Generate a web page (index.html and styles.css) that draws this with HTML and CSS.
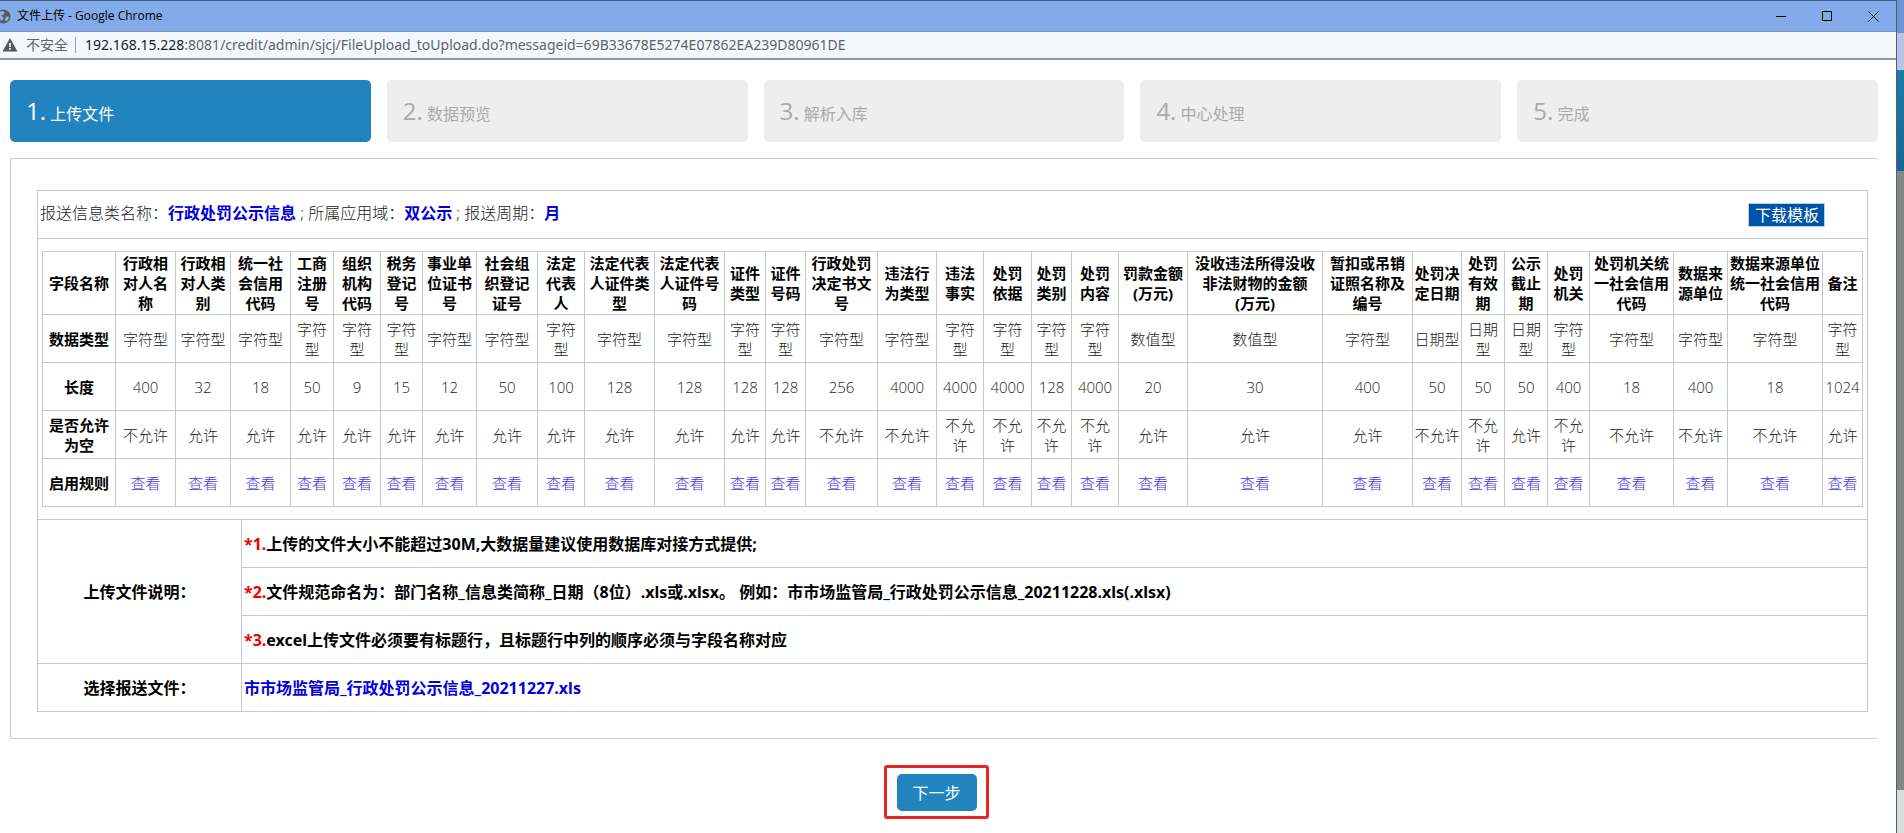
FILE: index.html
```html
<!DOCTYPE html>
<html lang="zh-CN">
<head>
<meta charset="utf-8">
<title>文件上传</title>
<link rel="stylesheet" href="styles.css">
</head>
<body>
<div class="desktop">
<div class="window">
  <header class="titlebar">
    <svg class="globe" viewBox="0 0 16 16" aria-hidden="true"><circle cx="8" cy="8" r="7.5" fill="#555b66"/><path d="M3 3.5 L7 2 L9 3.5 L8 6 L5 7 L8 9 L7 12.5 L5 12 L4 9 L1.5 7 Z M11 8 L14 8.5 L12.5 12 L10 13 L9.5 10.5 Z" fill="#8fb2e8"/></svg>
    <span class="caption">文件上传 - Google Chrome</span>
    <div class="controls">
      <button type="button" aria-label="最小化"><svg viewBox="0 0 11 11"><path d="M0 5.5H10" /></svg></button>
      <button type="button" aria-label="最大化"><svg viewBox="0 0 11 11"><path d="M.5 .5H9.5V9.5H.5Z" /></svg></button>
      <button type="button" aria-label="关闭"><svg viewBox="0 0 11 11"><path d="M.5 .5L10.5 10.5M10.5 .5L.5 10.5" /></svg></button>
    </div>
  </header>
  <div class="address">
    <svg class="warn" viewBox="0 0 16 14" aria-hidden="true"><path d="M8 0L15.5 13.5H.5Z" fill="#55585d"/><path d="M7.2 5h1.6v4H7.2zM7.2 10h1.6v1.7H7.2z" fill="#fff"/></svg>
    <span class="insecure">不安全</span>
    <span class="url"><b>192.168.15.228</b>:8081/credit/admin/sjcj/FileUpload_toUpload.do?messageid=69B33678E5274E07862EA239D80961DE</span>
  </div>
  <main class="page">
    <ol class="steps">
      <li class="step current"><span class="num">1.</span> 上传文件</li>
      <li class="step"><span class="num">2.</span> 数据预览</li>
      <li class="step"><span class="num">3.</span> 解析入库</li>
      <li class="step"><span class="num">4.</span> 中心处理</li>
      <li class="step"><span class="num">5.</span> 完成</li>
    </ol>
    <section class="panel">
      <table class="form">
        <colgroup><col class="label-col"><col></colgroup>
        <tbody>
        <tr><td colspan="2"><div class="summary"><p>报送信息类名称：<strong>行政处罚公示信息</strong> ; 所属应用域：<strong>双公示</strong> ; 报送周期：<strong>月</strong></p><button type="button" class="download">下载模板</button></div></td></tr>
        <tr><td colspan="2" class="holder">
          <table class="fields">
            <colgroup id="cols"></colgroup>
            <tbody id="rows"></tbody>
          </table>
        </td></tr>
        <tr><th rowspan="3" scope="rowgroup">上传文件说明：</th><td class="note"><em>*1.</em>上传的文件大小不能超过30M,大数据量建议使用数据库对接方式提供;</td></tr>
        <tr><td class="note"><em>*2.</em>文件规范命名为：部门名称_信息类简称_日期（8位）.xls或.xlsx。 例如：市市场监管局_行政处罚公示信息_20211228.xls(.xlsx)</td></tr>
        <tr><td class="note"><em>*3.</em>excel上传文件必须要有标题行，且标题行中列的顺序必须与字段名称对应</td></tr>
        <tr><th scope="row">选择报送文件：</th><td class="note"><a class="file" href="#">市市场监管局_行政处罚公示信息_20211227.xls</a></td></tr>
        </tbody>
      </table>
    </section>
    <div class="actions"><div class="highlight"><button type="button" class="next">下一步</button></div></div>
  </main>
</div>
<aside class="behind" aria-hidden="true"><i class="b1"></i><i class="b2"></i><i class="b3"></i><i class="b4"></i><i class="b5"></i></aside>
</div>
<script src="fields.js"></script>
</body>
</html>
```
FILE: styles.css
```css
* { box-sizing: border-box; }
body {
  margin: 0;
  background: #fff;
  color: #222;
  font: 300 16px/20px "Open Sans", "Noto Sans CJK SC", sans-serif;
}
button { font: inherit; cursor: pointer; }
.desktop { display: flex; min-height: 100vh; }
.window { flex: 1; min-width: 0; border-right: 1px solid #4a5f85; }

.titlebar {
  display: flex;
  align-items: center;
  height: 32px;
  border-top: 1px solid #3f5b8c;
  border-bottom: 1px solid #7c94c0;
  background: #83abe9;
  color: #000;
  font-size: 12px;
  font-weight: 400;
}
.globe { width: 15px; height: 15px; margin-left: -4px; }
.caption { margin-left: 6px; }
.controls { display: flex; margin-left: auto; }
.controls button {
  display: flex;
  align-items: center;
  justify-content: center;
  width: 46px;
  height: 30px;
  padding: 0;
  border: 0;
  background: none;
}
.controls svg { width: 11px; height: 11px; fill: none; stroke: #000; }

.address {
  display: flex;
  align-items: center;
  height: 28px;
  border-bottom: 2px solid #9195b2;
  background: #f4f8fe;
  color: #5f6368;
  font-size: 14px;
  font-weight: 400;
}
.warn { width: 16px; height: 14px; margin-left: 2px; }
.insecure { margin-left: 8px; padding-right: 7px; border-right: 1px solid #9aa0a6; line-height: 16px; }
.url { margin-left: 9px; font-family: "Noto Sans", "Open Sans", sans-serif; }
.url b { color: #202124; font-weight: 400; }

.page { padding: 20px 18px 0 10px; }
.steps { display: flex; gap: 16px; margin: 0; padding: 0; list-style: none; }
.step {
  flex: 1;
  height: 62px;
  padding: 0 16px;
  border-radius: 5px;
  background: #eee;
  color: #aaa;
  line-height: 62px;
  font-weight: 400;
}
.step.current { background: #2184be; color: #fff; }
.num { font-size: 24px; }

.panel {
  margin-top: 16px;
  padding: 31px 10px 26px 26px;
  border: 1px solid #ccc;
  border-right: 0;
  border-radius: 3px;
}
table { width: 100%; border-collapse: collapse; table-layout: fixed; }
th, td { border: 1px solid #c8c8c8; }
.form > tbody > tr { height: 48px; }
.form > tbody > tr > td { padding: 0 2px; }
.form th { color: #000; font-weight: 700; padding: 0; }
.form > tbody > tr > td.holder { padding: 12px 4px; }
.label-col { width: 204px; }
.summary { display: flex; align-items: center; justify-content: space-between; }
.summary p { margin: 0; padding-bottom: 3px; }
.summary strong { color: #00d; font-weight: 700; }
.download {
  height: 24px;
  margin-right: 40px;
  padding: 0 5px 0 6px;
  border: 1px solid #b5d3ee;
  background: #0054a8;
  color: #fff;
  font-weight: 400;
  line-height: 20px;
}
.note { color: #000; font-family: "Noto Sans", "Noto Sans CJK SC", sans-serif; font-weight: 700; }
.note em { color: #e00; font-style: normal; }
.file { color: #00d; text-decoration: none; }

.fields { font-size: 15px; text-align: center; }
.fields tr { height: 48px; }
.fields tr:first-child { height: 63px; }
.fields th, .fields td { padding: 0 2px; }
.fields .tight { padding: 0 1px; }
.fields a { color: #4038e0; text-decoration: none; }
.unit { white-space: nowrap; }

.actions { display: flex; justify-content: center; margin: 26px 16px 0 0; }
.highlight { padding: 6px 9px 5px 10px; border: 3px solid #e8251f; border-radius: 3px; }
.next {
  display: block;
  width: 80px;
  height: 37px;
  padding: 0;
  border: 0;
  border-radius: 5px;
  background: #2184be;
  color: #fff;
  font-weight: 400;
}

.behind { display: flex; flex-direction: column; width: 7px; }
.b1 { height: 33px; background: #6c95d2; }
.b2 { height: 37px; background: #b7c4e2; }
.b3 { height: 101px; background: linear-gradient(#1b7ba8, #186796); }
.b4 { flex: 1; background: #858585; }
.b5 { height: 43px; background: #dcdcdc; }
```
FILE: fields.js
```
// name, type, length, may be empty, column weight
const Z = '字符型', R = '日期型', S = '数值型', Y = '允许', N = '不允许';
const U = '<span class="unit">(万元)</span>';
const fields = [
  ['行政相对人名称', Z, 400, N, 60], ['行政相对人类别', Z, 32, Y, 55],
  ['统一社会信用代码', Z, 18, Y, 60], ['工商注册号', Z, 50, Y, 43],
  ['组织机构代码', Z, 9, Y, 47], ['税务登记号', Z, 15, Y, 42],
  ['事业单位证书号', Z, 12, Y, 54], ['社会组织登记证号', Z, 50, Y, 61],
  ['法定代表人', Z, 100, Y, 47], ['法定代表人证件类型', Z, 128, Y, 70],
  ['法定代表人证件号码', Z, 128, Y, 70], ['证件类型', Z, 128, Y, 41],
  ['证件号码', Z, 128, Y, 40], ['行政处罚决定书文号', Z, 256, N, 72],
  ['违法行为类型', Z, 4000, N, 59], ['违法事实', Z, 4000, N, 47],
  ['处罚依据', Z, 4000, N, 48], ['处罚类别', Z, 128, N, 40],
  ['处罚内容', Z, 4000, N, 47], ['罚款金额' + U, S, 20, Y, 69],
  ['没收违法所得没收非法财物的金额' + U, S, 30, Y, 135],
  ['暂扣或吊销证照名称及编号', Z, 400, Y, 90], ['处罚决定日期', R, 50, N, 49],
  ['处罚有效期', R, 50, N, 43], ['公示截止期', R, 50, Y, 43],
  ['处罚机关', Z, 400, N, 42], ['处罚机关统一社会信用代码', Z, 18, N, 84],
  ['数据来源单位', Z, 400, N, 54], ['数据来源单位统一社会信用代码', Z, 18, N, 95],
  ['备注', Z, 1024, Y, 40]
];
const tight = w => (w === 49 || w === 95 ? ' class="tight"' : '');
document.getElementById('cols').innerHTML =
  [73, ...fields.map(f => f[4])].map(w => `<col style="width:${w}px">`).join('');
const row = (label, cell) =>
  `<tr><th scope="row">${label}</th>${fields.map(cell).join('')}</tr>`;
document.getElementById('rows').innerHTML =
  row('字段名称', f => `<th scope="col"${tight(f[4])}>${f[0]}</th>`) +
  row('数据类型', f => `<td${tight(f[4])}>${f[1]}</td>`) +
  row('长度', f => `<td>${f[2]}</td>`) +
  row('是否允许为空', f => `<td${tight(f[4])}>${f[3]}</td>`) +
  row('启用规则', () => '<td><a href="#">查看</a></td>');
```
